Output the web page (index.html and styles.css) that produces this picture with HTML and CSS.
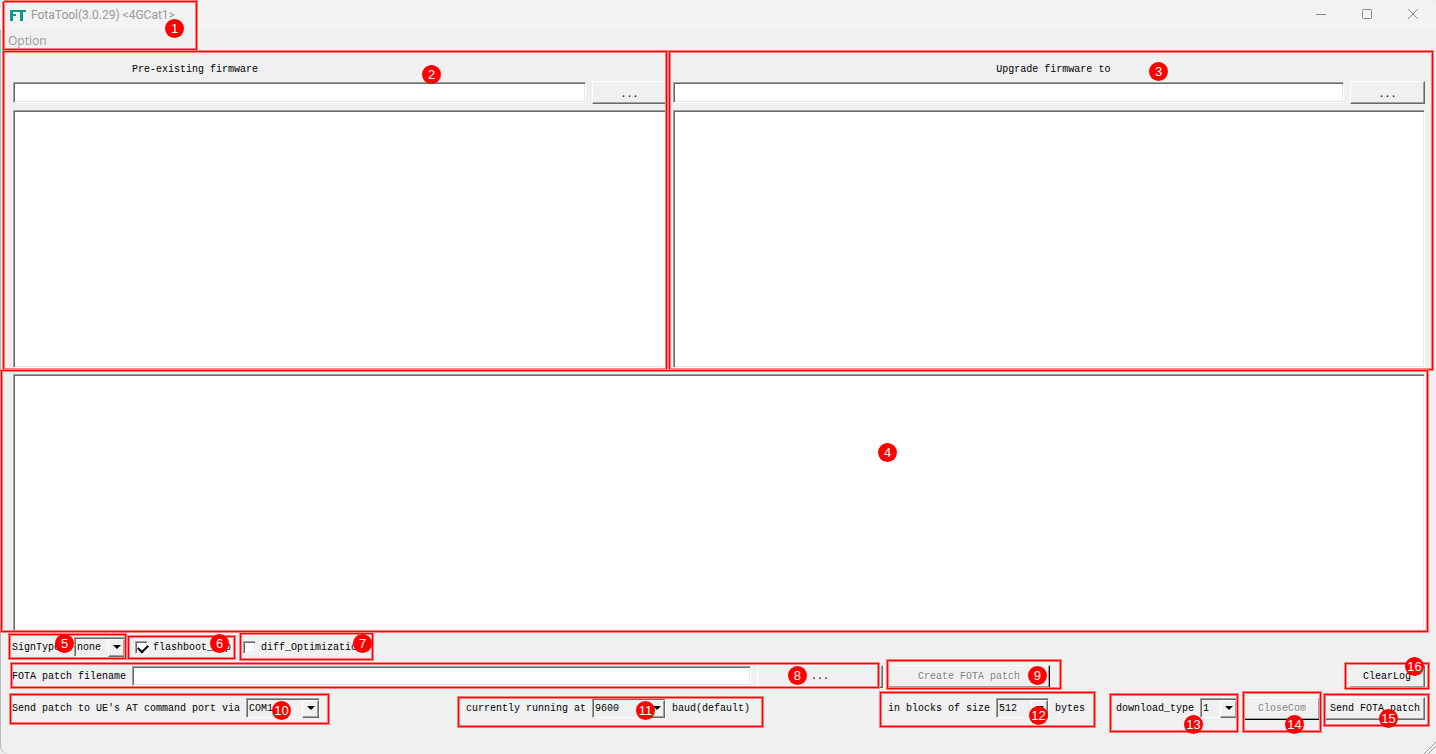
FILE: index.html
```html
<!DOCTYPE html>
<html lang="en">
<head>
  <meta charset="UTF-8">
  <title>FotaTool(3.0.29) &lt;4GCat1&gt;</title>
  <link rel="stylesheet" href="styles.css">
</head>
<body>
  <div class="window">
    <header class="window-header">
      <div class="title-bar">
        <svg class="logo" viewBox="0 0 16 12" width="16" height="12" aria-hidden="true">
          <path d="M0 1h7v2H3v2h3v2H3v5H0z"/>
          <path d="M7 1h9v2h-3v9h-3V3H7z"/>
        </svg>
        <h1>FotaTool(3.0.29) &lt;4GCat1&gt;</h1>
        <div class="window-buttons">
          <button type="button" aria-label="Minimize">
            <svg viewBox="0 0 12 12" width="12" height="12"><path d="M1 5.5h10"/></svg>
          </button>
          <button type="button" aria-label="Maximize">
            <svg viewBox="0 0 12 12" width="12" height="12"><rect x="1.5" y="0.5" width="9" height="9" rx="1"/></svg>
          </button>
          <button type="button" aria-label="Close">
            <svg viewBox="0 0 12 12" width="12" height="12"><path d="M1 0l10 10M11 0L1 10"/></svg>
          </button>
        </div>
      </div>
      <nav class="menu-bar"><a href="#option">Option</a></nav>
      <div class="mark mark-1"><span class="badge">1</span></div>
    </header>

    <main>
      <!-- Firmware panes -->
      <div class="panes">
        <section class="pane pane-old">
          <label for="old-path">Pre-existing firmware</label>
          <div class="path-row">
            <input type="text" id="old-path" class="sunken">
            <button type="button" class="raised browse">...</button>
          </div>
          <textarea class="sunken" aria-label="Pre-existing firmware details"></textarea>
          <div class="mark mark-2"><span class="badge">2</span></div>
        </section>
        <section class="pane pane-new">
          <label for="new-path">Upgrade firmware to</label>
          <div class="path-row">
            <input type="text" id="new-path" class="sunken">
            <button type="button" class="raised browse">...</button>
          </div>
          <textarea class="sunken" aria-label="Upgrade firmware details"></textarea>
          <div class="mark mark-3"><span class="badge">3</span></div>
        </section>
      </div>

      <!-- Log -->
      <section class="log">
        <textarea class="sunken" aria-label="Log"></textarea>
        <div class="mark mark-4"><span class="badge">4</span></div>
      </section>

      <!-- Options -->
      <div class="options">
        <div class="group sign-group">
          <label for="sign-type">SignType</label>
          <div class="combo combo-sign">
            <select id="sign-type"><option>none</option></select>
          </div>
          <div class="mark mark-5"><span class="badge">5</span></div>
        </div>
        <div class="group check-group">
          <input type="checkbox" id="flashboot" checked>
          <label for="flashboot">flashboot_tap</label>
          <div class="mark mark-6"><span class="badge">6</span></div>
        </div>
        <div class="group check-group">
          <input type="checkbox" id="diff-opt">
          <label for="diff-opt">diff_Optimization</label>
          <div class="mark mark-7"><span class="badge">7</span></div>
        </div>
      </div>

      <!-- Patch creation and sending -->
      <div class="controls">
        <div class="group patch-file">
          <label for="patch-name">FOTA patch filename</label>
          <input type="text" id="patch-name" class="sunken">
          <button type="button" class="raised">...</button>
          <div class="mark mark-8"><span class="badge">8</span></div>
        </div>
        <div class="group create">
          <button type="button" class="raised" disabled>Create FOTA patch</button>
          <div class="mark mark-9"><span class="badge">9</span></div>
        </div>
        <div class="group clear">
          <button type="button" class="raised">ClearLog</button>
          <div class="mark mark-16"><span class="badge">16</span></div>
        </div>

        <div class="group">
          <label for="port">Send patch to UE's AT command port via</label>
          <div class="combo combo-wide">
            <select id="port"><option>COM1</option></select>
          </div>
          <div class="mark mark-10"><span class="badge">10</span></div>
        </div>
        <div class="group">
          <label for="baud">currently running at</label>
          <div class="combo combo-wide">
            <select id="baud"><option>9600</option></select>
          </div>
          <span class="unit">baud(default)</span>
          <div class="mark mark-11"><span class="badge">11</span></div>
        </div>
        <div class="group">
          <label for="block-size">in blocks of size</label>
          <div class="combo combo-size">
            <select id="block-size"><option>512</option></select>
          </div>
          <span class="unit">bytes</span>
          <div class="mark mark-12"><span class="badge">12</span></div>
        </div>
        <div class="group">
          <label for="download-type">download_type</label>
          <div class="combo combo-type">
            <select id="download-type"><option>1</option></select>
          </div>
          <div class="mark mark-13"><span class="badge">13</span></div>
        </div>
        <div class="group close-com">
          <button type="button" class="raised" disabled>CloseCom</button>
          <div class="mark mark-14"><span class="badge">14</span></div>
        </div>
        <div class="group send">
          <button type="button" class="raised">Send FOTA patch</button>
          <div class="mark mark-15"><span class="badge">15</span></div>
        </div>
      </div>
    </main>

    <footer class="status-bar">
      <svg viewBox="0 0 12 12" width="12" height="12" aria-hidden="true">
        <path d="M0 12L12 0M4 12L12 4M8 12L12 8"/>
      </svg>
    </footer>
  </div>
</body>
</html>
```
FILE: styles.css
```css
* {
  box-sizing: border-box;
}

body {
  margin: 0;
  background-color: #f0f0f0;
  color: #000;
  font: 10px/12px "Liberation Mono", monospace;
}

button,
input,
select,
textarea {
  margin: 0;
  font: inherit;
  color: inherit;
}

.window {
  display: flex;
  flex-direction: column;
  min-height: 100vh;
  overflow: hidden;
  border-radius: 8px;
  box-shadow: inset 1px 0 #b8b8b8;
}

/* Title and menu */
.window-header {
  position: relative;
  color: #999;
  font: 12px/16px "Open Sans", sans-serif;
}

.title-bar {
  display: flex;
  align-items: center;
  height: 30px;
  padding-left: 10px;
  background-color: #f3f3f3;
}

.title-bar h1 {
  margin: 0 auto 0 5px;
  font: 12px/16px Roboto, sans-serif;
}

.logo {
  fill: #109888;
}

.window-buttons {
  display: flex;
}

.window-buttons button {
  display: flex;
  align-items: center;
  justify-content: center;
  width: 46px;
  height: 28px;
  padding: 0;
  border: none;
  background: none;
}

.window-buttons svg {
  fill: none;
  stroke: #8a8a8a;
}

.menu-bar {
  height: 21px;
  padding: 3px 8px;
}

.menu-bar a {
  color: #999;
  text-decoration: none;
}

main {
  flex: 1;
  display: flex;
  flex-direction: column;
  padding: 0 11px 0 13px;
}

/* Bevelled controls */
.sunken {
  display: block;
  min-width: 0;
  border: 1px solid;
  border-color: #a0a0a0 #fff #fff #a0a0a0;
  border-radius: 0;
  outline: none;
  background-color: #fff;
  box-shadow: inset 1px 1px #696969, inset -1px -1px #e8e8e8;
  padding: 2px 4px;
}

input.sunken {
  flex: 1;
  height: 20px;
}

textarea.sunken {
  flex: 1;
  width: 100%;
  resize: none;
}

.raised {
  height: 23px;
  padding: 2px 0 0;
  border: 1px solid;
  border-color: #fff #696969 #696969 #fff;
  background-color: #f0f0f0;
  box-shadow: inset -1px -1px #a0a0a0;
  text-align: center;
  white-space: nowrap;
}

.raised:disabled {
  color: #808080;
  text-shadow: 1px 1px #fff;
  border-right-color: #000;
  border-bottom-color: #000;
}

/* Firmware panes */
.panes {
  flex: 1;
  display: grid;
  grid-template-columns: 654fr 752fr;
  gap: 6px;
}

.pane {
  position: relative;
  display: flex;
  flex-direction: column;
}

.pane label {
  padding: 13px 0 5px;
}

.pane-old label {
  padding-left: 119px;
}

.pane-new label {
  padding-left: 43%;
}

.path-row {
  display: flex;
  align-items: center;
  gap: 6px;
  margin-bottom: 6px;
}

.path-row .sunken {
  height: 21px;
}

.browse {
  width: 75px;
  padding-top: 4px;
}

.log {
  position: relative;
  flex: 1;
  display: flex;
  margin-top: 6px;
}

/* Option rows */
.options {
  display: flex;
  gap: 12px;
  height: 32px;
  margin-left: -1px;
}

.controls {
  display: grid;
  grid-template-columns: 454fr 422fr 228fr auto auto auto;
  grid-template-rows: 26px 38px;
  margin-left: -1px;
}

.group {
  position: relative;
  display: flex;
  align-items: center;
  gap: 6px;
  white-space: nowrap;
}

.group label,
.unit {
  padding-top: 2px;
}

.sign-group {
  width: 114px;
  justify-content: space-between;
  margin-right: -3px;
}

.check-group {
  gap: 5px;
}

.patch-file {
  grid-column: 1 / 3;
  margin-right: 5px;
}

.patch-file .raised {
  width: 126px;
}

.controls .group {
  justify-self: start;
}

.controls .patch-file {
  justify-self: stretch;
}

.create .raised {
  width: 162px;
}

.controls .clear {
  grid-column: 4 / 7;
  justify-self: end;
}

.clear .raised,
.close-com .raised {
  width: 76px;
}

.close-com {
  margin: 0 5px 0 6px;
}

.send .raised {
  width: 100px;
}

/* Drop-downs */
.combo {
  position: relative;
  height: 20px;
  border: 1px solid;
  border-color: #a0a0a0 #fff #fff #a0a0a0;
  box-shadow: inset 1px 1px #696969;
}

.combo select {
  appearance: none;
  display: block;
  width: 100%;
  height: 18px;
  padding: 2px 16px 0 2px;
  border: none;
  background: none;
}

.combo::before {
  content: "";
  position: absolute;
  top: 1px;
  right: 0;
  width: 15px;
  height: 16px;
  border: 1px solid;
  border-color: #fff #696969 #696969 #fff;
  background-color: #f0f0f0;
  box-shadow: inset -1px -1px #a0a0a0;
  pointer-events: none;
}

.combo::after {
  content: "";
  position: absolute;
  top: 7px;
  right: 4px;
  border: 4px solid transparent;
  border-top-color: #000;
  border-bottom: none;
  pointer-events: none;
}

.combo-sign {
  width: 52px;
}

.combo-wide {
  width: 74px;
}

.combo-size {
  width: 53px;
}

.combo-type {
  width: 38px;
}

/* Check boxes */
input[type="checkbox"] {
  appearance: none;
  display: grid;
  width: 13px;
  height: 13px;
  border: 1px solid;
  border-color: #a0a0a0 #fff #fff #a0a0a0;
  background-color: #fff;
  box-shadow: inset 1px 1px #696969, inset -1px -1px #e8e8e8;
}

input[type="checkbox"]:checked::before {
  content: "";
  width: 8px;
  height: 5px;
  margin: 2px 0 0 2px;
  border: solid #000;
  border-width: 0 0 2px 2px;
  transform: rotate(-45deg);
}

.status-bar {
  display: flex;
  align-items: flex-end;
  justify-content: flex-end;
  height: 27px;
}

.status-bar svg {
  fill: none;
  stroke: #a0a0a0;
}

/* Numbered callouts */
.mark {
  position: absolute;
  z-index: 1;
  box-shadow: inset 0 0 0 1px #ff8080, inset 0 0 0 2px #f00, inset 0 0 0 3px #ff8080;
  pointer-events: none;
}

.badge {
  position: absolute;
  width: 19px;
  height: 19px;
  border-radius: 50%;
  background-color: #f00;
  color: #fff;
  font: 13px/19px "Liberation Sans", sans-serif;
  text-align: center;
}

.mark-1 { inset: 0 auto 0 2px; width: 196px; }
.mark-2 { inset: -1px -1px -3px -11px; }
.mark-3 { inset: -1px -9px -3px -5px; }
.mark-4 { inset: -5px -4px -2px -13px; }
.mark-5 { inset: 2px -1px 3px -4px; }
.mark-6 { inset: 4px -5px 3px -8px; }
.mark-7 { inset: 1px -11px 2px -4px; }
.mark-8 { inset: -1px 3px 0 -2px; }
.mark-9 { inset: -4px -12px -1px -2px; }
.mark-10 { inset: 4px -10px 2px -3px; }
.mark-11 { inset: 7px -14px -1px -9px; }
.mark-12 { inset: 2px -11px -1px -9px; }
.mark-13 { inset: 4px -1px -6px -7px; }
.mark-14 { inset: 2px -2px -6px -2px; }
.mark-15 { inset: 4px -5px 0 -2px; }
.mark-16 { inset: -1px -5px -1px -5px; }

.mark-1 .badge { top: 19px; right: 14px; }
.mark-2 .badge { top: 15px; right: 227px; }
.mark-3 .badge { top: 12px; right: 266px; }
.mark-4 .badge { top: 74px; right: 532px; }
.mark-5 .badge { top: 1px; right: 53px; }
.mark-6 .badge { top: -1px; right: 7px; }
.mark-7 .badge { top: 2px; right: 2px; }
.mark-8 .badge { top: 4px; right: 73px; }
.mark-9 .badge { top: 7px; right: 15px; }
.mark-10 .badge { top: 8px; right: 39px; }
.mark-11 .badge { top: 5px; right: 109px; }
.mark-12 .badge { top: 15px; right: 48px; }
.mark-13 .badge { top: 22px; right: 36px; }
.mark-14 .badge { top: 24px; right: 18px; }
.mark-15 .badge { top: 16px; right: 32px; }
.mark-16 .badge { top: -5px; right: 6px; }
```
